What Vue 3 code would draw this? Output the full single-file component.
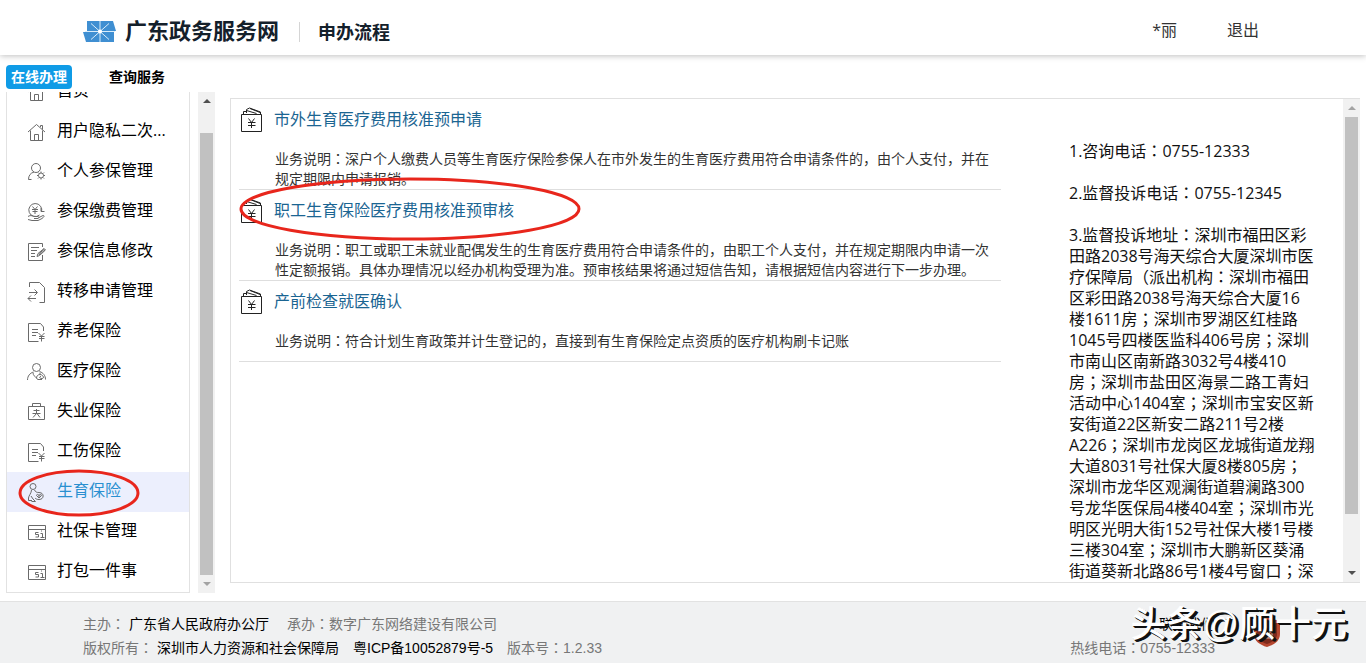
<script setup>
import { onMounted, ref } from 'vue'

const menu = [
  { label: '首页', icon: 'home' },
  { label: '用户隐私二次...', icon: 'home' },
  { label: '个人参保管理', icon: 'user' },
  { label: '参保缴费管理', icon: 'pay' },
  { label: '参保信息修改', icon: 'edit' },
  { label: '转移申请管理', icon: 'transfer' },
  { label: '养老保险', icon: 'bill' },
  { label: '医疗保险', icon: 'medical' },
  { label: '失业保险', icon: 'case' },
  { label: '工伤保险', icon: 'bill' },
  { label: '生育保险', icon: 'birth', active: true },
  { label: '社保卡管理', icon: 'card' },
  { label: '打包一件事', icon: 'card' },
]

const icons = {
  home: 'M1 10 9.500 2.500l8.500 7.500M3.500 8.500v10h12v-10M7.500 18.500v-6h4v6M13.500 5V3.500h2v4',
  user: 'M9 1.500a4.500 4.500 0 1 0 0 9a4.500 4.500 0 1 0 0-9M1.500 17.500c0-4 2-6.500 5.500-7.500M1.500 17.500h3M14 9.500v1.500M14 16v1.500M10 13.500h1.500M16.500 13.500H18M11 10.500l1 1M16 15.500l1 1M17 10.500l-1 1M12 15.500l-1 1M14 11a2.500 2.500 0 1 0 0 5a2.500 2.500 0 1 0 0-5',
  pay: 'M14.500 10a6.500 6.500 0 1 0-2 3M14 6v3.500h3.500M5.500 4.500 8 7.500l2.500-3M5 7.500h6M5.500 9.500h5M8 7v5M1 14.500c3-2 5 0 7 0h3c1 0 1 2 0 2H7M12 15.500l4-2c2 0 1 1.500-1 3l-4 2H5l-4-1',
  edit: 'M15.500 5V1.500h-14v17h14V13M4 5.500h8M4 8.500h6M4 11.500h4M4 14.500h4M10 14.500l1-3 6-5 1.500 1.500-6 5.500zM11.500 12l6-5M12 13l6-5',
  transfer: 'M2.500 5V.5h10l5 5v15h-5M2 10.500h8M7.500 7.500l3 3-3 3M9 16.500H1M4 13.500l-3 3 3 3',
  bill: 'M16.500 9V5l-3-3.500h-12v18h10M5 7.500h6M5 10.500h6M5 13.500h4M11.500 11l3 3 3-3M12 14.500h5.500M12 16.500h5.500M14.500 14v5.500',
  medical: 'M9.500 1.500a4 4 0 1 0 0 8a4 4 0 1 0 0-8M.5 18c0-4 2.500-7 6-8M12.500 9.500c3.500 1 6 4 6 8M6 10.500c0 3 2 4 3.500 5.500M13 10.500v2M11 17.500c-3-1-1-5 2-5s5 4 2 4-3-2-1-2M11 17.500h4',
  case: 'M1.500 4.500h16v13h-16zM5.500 4.500v-3h8v3M6.500 8.500h6M5.500 11.500h8M9.500 7v4.500L6 15.500M10 11.500l3 4',
  birth: 'M6 1.500a3 3 0 1 0 0 6a3 3 0 1 0 0-6M4.500 8c0 3-3 6-3 8v2.500h3.500M7.500 8c1 2 2 2.500 4.500 2.500 5.500 0 5.500 7 0 7-2 0-3-.5-4-1.500M4 14l2 3 2.500 2.500h-4M12 16l-2.500-2.500c0-1.500 2-1.500 2.500 0 .5-1.500 2.500-1.500 2.500 0zM11 14h2.500',
  card: 'M1.500 3.500h17v14h-17zM1.500 7.500h17M11.500 10.500h-3v2h3v2.500h-3M14.500 8.500v1M13.500 11.500h2v4M13.500 15.500h4',
}

const services = [
  {
    title: '市外生育医疗费用核准预申请',
    text: '业务说明：深户个人缴费人员等生育医疗保险参保人在市外发生的生育医疗费用符合申请条件的，由个人支付，并在规定期限内申请报销。',
  },
  {
    title: '职工生育保险医疗费用核准预审核',
    text: '业务说明：职工或职工未就业配偶发生的生育医疗费用符合申请条件的，由职工个人支付，并在规定期限内申请一次性定额报销。具体办理情况以经办机构受理为准。预审核结果将通过短信告知，请根据短信内容进行下一步办理。',
    marked: true,
  },
  {
    title: '产前检查就医确认',
    text: '业务说明：符合计划生育政策并计生登记的，直接到有生育保险定点资质的医疗机构刷卡记账',
  },
]

const contacts = [
  '1.咨询电话：0755-12333',
  '2.监督投诉电话：0755-12345',
  '3.监督投诉地址：深圳市福田区彩田路2038号海天综合大厦深圳市医疗保障局（派出机构：深圳市福田区彩田路2038号海天综合大厦16楼1611房；深圳市罗湖区红桂路1045号四楼医监科406号房；深圳市南山区南新路3032号4楼410房；深圳市盐田区海景二路工青妇活动中心1404室；深圳市宝安区新安街道22区新安二路211号2楼A226；深圳市龙岗区龙城街道龙翔大道8031号社保大厦8楼805房；深圳市龙华区观澜街道碧澜路300号龙华医保局4楼404室；深圳市光明区光明大街152号社保大楼1号楼三楼304室；深圳市大鹏新区葵涌街道葵新北路86号1楼4号窗口；深',
]

// Colons and semicolons are set apart so they can use centred glyphs.
const pieces = (text) => text.split(/([：；])/).filter(Boolean)
const isMark = (piece) => piece === '：' || piece === '；'

const side = ref(null)
onMounted(() => {
  side.value.scrollTop = side.value.scrollHeight
})
</script>

<template>
  <div class="page">
    <header class="header">
      <svg class="logo" width="34" height="24" viewBox="0 0 34 24" aria-hidden="true">
        <path d="M4 1h26l3 10h-2v11H3L0 12h4z" fill="#3f8fd2" />
        <path d="M17 1v21M2 11.500h30M8 3.500l18 16M26 3.500l-18 16" stroke="#d9ecfa" stroke-width="1" />
        <circle cx="17" cy="11.500" r="2" fill="#fff" />
      </svg>
      <h1 class="site">广东政务服务网</h1>
      <h2 class="flow">申办流程</h2>
      <nav class="account">
        <a href="#">*丽</a>
        <a href="#">退出</a>
      </nav>
    </header>

    <nav class="tabs">
      <button class="tab on" type="button">在线办理</button>
      <button class="tab" type="button">查询服务</button>
    </nav>

    <main class="main">
      <div ref="side" class="side">
        <ul class="menu">
          <li v-for="item in menu" :key="item.label">
            <a href="#" class="entry" :class="{ active: item.active }">
              <svg class="glyph" width="20" height="20" viewBox="0 0 20 20" aria-hidden="true">
                <path :d="icons[item.icon]" />
              </svg>
              <span>{{ item.label }}</span>
              <svg v-if="item.active" class="ring small" width="122" height="50" viewBox="0 0 122 50" aria-hidden="true">
                <ellipse cx="61" cy="25" rx="59" ry="22" />
              </svg>
            </a>
          </li>
        </ul>
      </div>
      <div class="bar bar-side" aria-hidden="true">
        <i class="up dark"></i><i class="thumb"></i><i class="down"></i>
      </div>

      <section class="panel">
        <div class="services">
          <article v-for="s in services" :key="s.title" class="service">
            <svg class="purse" width="22" height="26" viewBox="0 0 22 26" aria-hidden="true">
              <path d="M.5 7.500h20v17H.5zM2.500 7V4.500h3M5.500 6V2.500l3-1.500 11 4v2M5.500 3.500l10 3M9 1.500l10 4" />
              <path d="M7.500 11.500l3 4 3-4M7 15.500h7.500M7 18.500h7.500M10.500 15.500v5.500" />
            </svg>
            <div class="body">
              <h3><a href="#">{{ s.title }}</a></h3>
              <p><span v-for="(t, i) in pieces(s.text)" :key="i" :class="{ mid: isMark(t) }">{{ t }}</span></p>
            </div>
            <svg v-if="s.marked" class="ring large" width="344" height="66" viewBox="0 0 344 66" aria-hidden="true">
              <ellipse cx="172" cy="33" rx="169" ry="30" />
            </svg>
          </article>
        </div>
        <aside class="contact">
          <p v-for="c in contacts" :key="c"><span v-for="(t, i) in pieces(c)" :key="i" :class="{ mid: isMark(t) }">{{ t }}</span></p>
        </aside>
        <div class="bar bar-panel" aria-hidden="true">
          <i class="up"></i><i class="thumb"></i><i class="down dark"></i>
        </div>
      </section>
    </main>

    <footer class="footer">
      <div class="legal">
        <p><span>主办<span class="mid">：</span></span><a href="#">广东省人民政府办公厅</a><span class="gap">承办<span class="mid">：</span>数字广东网络建设有限公司</span></p>
        <p><span>版权所有<span class="mid">：</span></span><a href="#">深圳市人力资源和社会保障局</a><a href="#" class="icp">粤ICP备10052879号-5</a><span>版本号<span class="mid">：</span>1.2.33</span></p>
      </div>
      <div class="hotline">
        <a href="#">联系我们</a>
        <p>热线电话<span class="mid">：</span>0755-12333</p>
      </div>
      <svg class="badge" width="30" height="32" viewBox="0 0 30 32" aria-hidden="true">
        <path d="M15 1c4 3 8 3 13 3v14c0 7-6 11-13 13C8 29 2 25 2 18V4c5 0 9 0 13-3z" fill="#b5462f" />
        <path d="M15 4c4 2 7 3 10 3v11c0 5-4 8-10 10C9 26 5 23 5 18V7c3 0 6-1 10-3z" fill="#7d2a1c" />
        <path d="M8 22h14M10 22v-6M13 22v-6M17 22v-6M20 22v-6M8 16l7-4 7 4z" stroke="#e8b9a4" stroke-width="1" fill="none" />
      </svg>
      <div class="mark">头条@顾十元</div>
    </footer>
  </div>
</template>

<style>
body {
  margin: 0;
  background: #fff;
}
</style>

<style scoped>
.page {
  display: flex;
  flex-direction: column;
  height: 100vh;
  overflow: hidden;
  font-family: "Open Sans", "Noto Sans CJK SC", sans-serif;
  font-size: 16px;
  color: #111;
}
h1, h2, h3, p, ul {
  margin: 0;
  padding: 0;
}
a {
  color: inherit;
  text-decoration: none;
}
.mid {
  font-family: "Noto Sans CJK JP", sans-serif;
  line-height: 1;
}
.header {
  display: flex;
  align-items: center;
  flex: none;
  height: 55px;
  padding: 0 107px 0 83px;
  box-sizing: border-box;
  box-shadow: 0 1px 6px rgba(0, 0, 0, 0.25);
}
.logo {
  margin-top: 8px;
}
.site {
  margin: 4px 0 0 8px;
  font-size: 22px;
  line-height: 30px;
  color: #14202b;
}
.flow {
  margin: 8px 0 0 20px;
  padding-left: 18px;
  border-left: 1px solid #d5d5d5;
  font-size: 18px;
  line-height: 20px;
  color: #14202b;
}
.account {
  display: flex;
  gap: 50px;
  margin: 2px 0 0 auto;
  color: #333;
}
.tabs {
  display: flex;
  flex: none;
  gap: 32px;
  padding: 10px 6px 3px;
}
.tab {
  height: 24px;
  padding: 0 5px;
  border: 0;
  border-radius: 4px;
  background: none;
  font-family: inherit;
  font-size: 14px;
  font-weight: 700;
  line-height: 24px;
  color: #000;
}
.tab.on {
  background: #0f9be6;
  color: #fff;
}
.main {
  display: flex;
  flex: 1;
  min-height: 0;
  padding: 0 6px 8px;
}
.side {
  flex: none;
  width: 184px;
  overflow: hidden;
}
.menu {
  list-style: none;
  border: 1px solid #e2e2e2;
}
.entry {
  position: relative;
  display: flex;
  align-items: center;
  height: 40px;
  padding-left: 20px;
  gap: 10px;
  line-height: 24px;
  color: #000;
}
.entry span {
  margin-bottom: 4px;
}
.entry.active {
  background: #eceffd;
  color: #2a8fd0;
}
.glyph {
  overflow: visible;
  fill: none;
  stroke: #6a6a6a;
  stroke-width: 1;
}
.ring {
  position: absolute;
  fill: none;
  stroke: #e8261c;
  stroke-width: 3;
  pointer-events: none;
}
.ring.small {
  left: 11px;
  top: -4px;
}
.ring.large {
  left: -1px;
  top: -14px;
}
.bar {
  display: flex;
  flex-direction: column;
  align-items: center;
  flex: none;
  width: 17px;
  background: #f1f1f1;
}
.bar-side {
  margin: 0 15px 0 8px;
}
.bar .up,
.bar .down {
  flex: none;
  width: 0;
  height: 0;
  margin: 7px 0;
  border: 4px solid transparent;
}
.bar .up {
  border-top: 0;
  border-bottom-color: #a3a3a3;
}
.bar .down {
  border-bottom: 0;
  border-top-color: #a3a3a3;
}
.bar .up.dark {
  border-bottom-color: #505050;
}
.bar .down.dark {
  border-top-color: #505050;
}
.bar .thumb {
  flex: 1;
  width: 13px;
  background: #c1c1c1;
}
.bar-side .thumb {
  margin-top: 23px;
}
.bar-panel .thumb {
  margin-bottom: 50px;
}
.panel {
  display: flex;
  flex: 1;
  min-width: 0;
  margin: 6px 0 10px;
  border: 1px solid #e0e0e0;
  border-right: 0;
  overflow: hidden;
}
.services {
  flex: 1;
  padding-left: 8px;
}
.service {
  position: relative;
  display: flex;
  gap: 11px;
  min-height: 81px;
  padding-left: 2px;
  box-sizing: border-box;
  border-bottom: 1px solid #dedede;
}
.purse {
  flex: none;
  margin-top: 8px;
  fill: none;
  stroke: #222;
  stroke-width: 1;
}
.service h3 {
  height: 40px;
  margin-bottom: 10px;
  font-size: 16px;
  font-weight: 400;
  line-height: 40px;
  color: #1b6592;
}
.service p {
  padding-left: 1px;
  font-size: 14px;
  line-height: 20px;
  color: #333;
}
.contact {
  width: 246px;
  margin: 42px 28px 0 68px;
  line-height: 21px;
}
.contact p {
  margin-bottom: 21px;
}
.footer {
  position: relative;
  display: flex;
  justify-content: space-between;
  flex: none;
  height: 62px;
  padding: 10px 151px 0 83px;
  box-sizing: border-box;
  border-top: 1px solid #e2e2e2;
  background: #f0f1f2;
  font-family: "Liberation Sans", "Noto Sans CJK SC", sans-serif;
  font-size: 14px;
  line-height: 24px;
  color: #777;
}
.footer a {
  color: #000;
}
.legal a {
  margin-left: 4px;
}
.legal .gap {
  margin-left: 18px;
}
.legal .icp {
  margin: 0 14px;
}
.hotline {
  text-align: right;
}
.badge {
  position: absolute;
  right: 84px;
  top: 14px;
}
.mark {
  position: absolute;
  right: 19px;
  top: 1px;
  font-size: 36px;
  font-weight: 500;
  line-height: 44px;
  color: #fff;
  text-shadow: 1px 1px 0 #111, 2px 2px 0 #111, 3px 2px 0 #111;
}
</style>
